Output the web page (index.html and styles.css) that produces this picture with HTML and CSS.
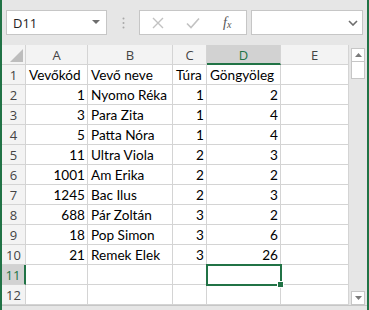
FILE: index.html
```html
<!DOCTYPE html>
<html lang="hu">
<head>
    <meta charset="UTF-8" />
    <title>Munkafüzet</title>
    <link rel="stylesheet" href="styles.css">
</head>
<body>
    <div class="app">
        <div class="toolbar">
            <div class="namebox">
                <span>D11</span>
                <svg class="caret" width="8" height="5" viewBox="0 0 8 5"><path d="M0 0h8L4 4z" fill="#6d6d6d"/></svg>
            </div>
            <div class="grip">
                <svg width="3" height="12" viewBox="0 0 3 12"><circle cx="1.5" cy="1.5" r="1" fill="#a8a8a8"/><circle cx="1.5" cy="6" r="1" fill="#a8a8a8"/><circle cx="1.5" cy="10.5" r="1" fill="#a8a8a8"/></svg>
            </div>
            <div class="fxbuttons">
                <svg class="btn" width="12" height="12" viewBox="0 0 12 12"><path d="M1 1L11 11M11 1L1 11" stroke="#c2c2c2" stroke-width="1.4"/></svg>
                <svg class="btn" width="14" height="12" viewBox="0 0 14 12"><path d="M1 6.5L5 10.5L13 1.5" stroke="#c2c2c2" stroke-width="1.6" fill="none"/></svg>
                <span class="fx">f<sub>x</sub></span>
            </div>
            <div class="formula">
                <svg class="chevron" width="10" height="6" viewBox="0 0 10 6"><path d="M1 1L5 5L9 1" stroke="#6d6d6d" stroke-width="1.6" fill="none"/></svg>
            </div>
        </div>

        <div class="body">
            <div class="grid">
                <div class="corner"><span class="tri"></span></div>
                <div class="colhead">A</div>
                <div class="colhead">B</div>
                <div class="colhead">C</div>
                <div class="colhead active">D</div>
                <div class="colhead">E</div>

                <div class="rowhead">1</div>
                <div class="cell">Vevőkód</div>
                <div class="cell">Vevő neve</div>
                <div class="cell">Túra</div>
                <div class="cell">Göngyöleg</div>
                <div class="cell"></div>

                <div class="rowhead">2</div>
                <div class="cell num">1</div>
                <div class="cell">Nyomo Réka</div>
                <div class="cell num">1</div>
                <div class="cell num">2</div>
                <div class="cell"></div>

                <div class="rowhead">3</div>
                <div class="cell num">3</div>
                <div class="cell">Para Zita</div>
                <div class="cell num">1</div>
                <div class="cell num">4</div>
                <div class="cell"></div>

                <div class="rowhead">4</div>
                <div class="cell num">5</div>
                <div class="cell">Patta Nóra</div>
                <div class="cell num">1</div>
                <div class="cell num">4</div>
                <div class="cell"></div>

                <div class="rowhead">5</div>
                <div class="cell num">11</div>
                <div class="cell">Ultra Viola</div>
                <div class="cell num">2</div>
                <div class="cell num">3</div>
                <div class="cell"></div>

                <div class="rowhead">6</div>
                <div class="cell num">1001</div>
                <div class="cell">Am Erika</div>
                <div class="cell num">2</div>
                <div class="cell num">2</div>
                <div class="cell"></div>

                <div class="rowhead">7</div>
                <div class="cell num">1245</div>
                <div class="cell">Bac Ilus</div>
                <div class="cell num">2</div>
                <div class="cell num">3</div>
                <div class="cell"></div>

                <div class="rowhead">8</div>
                <div class="cell num">688</div>
                <div class="cell">Pár Zoltán</div>
                <div class="cell num">3</div>
                <div class="cell num">2</div>
                <div class="cell"></div>

                <div class="rowhead">9</div>
                <div class="cell num">18</div>
                <div class="cell">Pop Simon</div>
                <div class="cell num">3</div>
                <div class="cell num">6</div>
                <div class="cell"></div>

                <div class="rowhead">10</div>
                <div class="cell num">21</div>
                <div class="cell">Remek Elek</div>
                <div class="cell num">3</div>
                <div class="cell num">26</div>
                <div class="cell"></div>

                <div class="rowhead active">11</div>
                <div class="cell"></div>
                <div class="cell"></div>
                <div class="cell"></div>
                <div class="cell selected"><span class="handle"></span></div>
                <div class="cell"></div>

                <div class="rowhead">12</div>
                <div class="cell"></div>
                <div class="cell"></div>
                <div class="cell"></div>
                <div class="cell"></div>
                <div class="cell"></div>
            </div>

            <div class="vscroll">
                <div class="sbtn"><svg width="7" height="4" viewBox="0 0 7 4"><path d="M0 4h7L3.5 0z" fill="#7a7a7a"/></svg></div>
                <div class="thumb"></div>
                <div class="track"></div>
                <div class="sbtn"><svg width="7" height="4" viewBox="0 0 7 4"><path d="M0 0h7L3.5 4z" fill="#7a7a7a"/></svg></div>
            </div>
        </div>
        <div class="hscroll"></div>
    </div>
</body>
</html>
```

FILE: styles.css
```css
body {
    margin: 0;
    background-color: #ffffff;
}

.app {
    width: 369px;
    height: 310px;
    box-sizing: border-box;
    border-left: 2px solid #217346;
    border-right: 2px solid #217346;
    background-color: #e6e6e6;
    overflow: hidden;
    font-family: "Open Sans", sans-serif;
}

.toolbar {
    height: 45px;
    box-sizing: border-box;
    padding: 10px 0 0 4px;
    display: flex;
    align-items: flex-start;
}

    .toolbar .namebox,
    .toolbar .fxbuttons,
    .toolbar .formula {
        height: 25px;
        box-sizing: border-box;
        background-color: #ffffff;
        border: 1px solid #c6c6c6;
        display: flex;
        align-items: center;
    }

.namebox {
    width: 101px;
    padding: 0 6px 0 6px;
    justify-content: space-between;
    font-size: 13px;
    color: #222;
}

.grip {
    width: 32px;
    height: 25px;
    display: flex;
    align-items: center;
    justify-content: center;
}

.fxbuttons {
    width: 108px;
    padding-left: 12px;
}

    .fxbuttons .btn:first-child {
        margin-right: 22px;
    }

    .fxbuttons .btn:nth-child(2) {
        margin-right: 23px;
    }

.fx {
    font-family: "Liberation Serif", serif;
    font-style: italic;
    font-size: 14px;
    color: #555;
}

    .fx sub {
        font-size: 10px;
        vertical-align: -1px;
    }

.formula {
    width: 112px;
    margin-left: 4px;
    justify-content: flex-end;
    padding-right: 4px;
}

.body {
    display: flex;
    height: 260px;
}

.grid {
    display: grid;
    grid-template-columns: 24px 62px 85px 34px 74px 68px;
    grid-auto-rows: 20px;
    background-color: #ffffff;
}

    .grid > div {
        box-sizing: border-box;
        border-right: 1px solid #d4d4d4;
        border-bottom: 1px solid #d4d4d4;
        position: relative;
    }

.corner {
    background-color: #f3f3f3;
}

    .corner .tri {
        position: absolute;
        right: 2px;
        bottom: 2px;
        width: 0;
        height: 0;
        border-left: 13px solid transparent;
        border-bottom: 13px solid #bdbdbd;
    }

.colhead {
    background-color: #f3f3f3;
    text-align: center;
    font-size: 13px;
    line-height: 20px;
    color: #444;
}

    .colhead.active {
        background-color: #d2d2d2;
        border-bottom: 2px solid #217346 !important;
        color: #217346;
    }

.rowhead {
    background-color: #f3f3f3;
    font-size: 13px;
    line-height: 20px;
    text-align: center;
    color: #444;
}

    .rowhead.active {
        background-color: #d2d2d2;
        border-right: 2px solid #217346 !important;
        color: #217346;
    }

.cell {
    font-family: "Lato", sans-serif;
    font-size: 13.6px;
    line-height: 20px;
    padding: 0 2px 0 3px;
    white-space: nowrap;
    color: #000;
}

    .cell.num {
        text-align: right;
    }

    .cell.selected {
        outline: 2px solid #217346;
        outline-offset: -1px;
        z-index: 1;
    }

.handle {
    position: absolute;
    right: -4px;
    bottom: -4px;
    width: 5px;
    height: 5px;
    background-color: #217346;
    border: 1px solid #ffffff;
}

.vscroll {
    width: 18px;
    display: flex;
    flex-direction: column;
    align-items: center;
    padding-top: 3px;
    box-sizing: border-box;
}

.sbtn {
    width: 14px;
    height: 14px;
    box-sizing: border-box;
    background-color: #ffffff;
    border: 1px solid #c6c6c6;
    display: flex;
    align-items: center;
    justify-content: center;
}

.thumb {
    width: 14px;
    height: 17px;
    box-sizing: border-box;
    background-color: #ffffff;
    border: 1px solid #c6c6c6;
    border-top: none;
}

.track {
    flex: 1;
}

.hscroll {
    height: 5px;
    border-top: 1px solid #c6c6c6;
}
```
